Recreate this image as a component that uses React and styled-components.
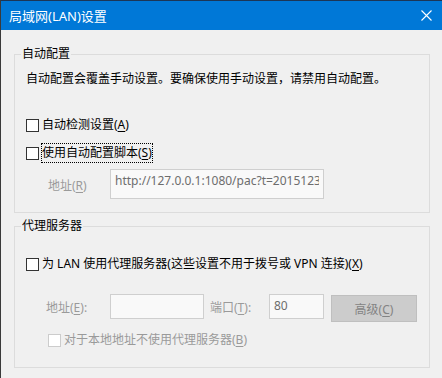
import React from "react";
import styled, { createGlobalStyle } from "styled-components";

const Global = createGlobalStyle`
  html, body { margin: 0; padding: 0; background: #f0f0f0; }
  body { font-family: "Noto Sans", "Noto Sans CJK SC", sans-serif; }
  * { box-sizing: border-box; }
`;

const FONT = `"Noto Sans", "Noto Sans CJK SC", sans-serif`;

const Window = styled.div`
  width: 442px;
  height: 378px;
  overflow: hidden;
  background: #f0f0f0;
  border-left: 1px solid #3a3a3a;
  display: flex;
  flex-direction: column;
  font-family: ${FONT};
  font-size: 12px;
  color: #000;
`;

const TitleBar = styled.div`
  height: 30px;
  flex: none;
  background: #0078d7;
  border-top: 1px solid #1c3656;
  display: flex;
  align-items: center;
  justify-content: space-between;
  padding: 0 10px 0 8px;
`;

const Title = styled.div`
  color: #fff;
  font-size: 13px;
  line-height: 16px;
`;

const Body = styled.div`
  padding: 16px 12px 0 13px;
  display: flex;
  flex-direction: column;
`;

const Group = styled.fieldset`
  margin: ${(p) => (p.$first ? "0" : "5px 0 0 0")};
  padding: 0;
  border: 1px solid #dcdcdc;
  min-width: 0;
`;

const Legend = styled.legend`
  margin-left: 6px;
  padding: 0 1px;
  font-size: 12px;
  line-height: 16px;
  color: #000;
`;

const GroupContent = styled.div`
  display: flex;
  flex-direction: column;
  padding: ${(p) => p.$pad};
`;

const Desc = styled.div`
  line-height: 16px;
  white-space: nowrap;
`;

const CheckRow = styled.div`
  display: flex;
  align-items: center;
  height: 20px;
  margin-top: ${(p) => p.$mt || 0}px;
  margin-left: ${(p) => p.$indent || 0}px;
`;

const Box = styled.span`
  width: 13px;
  height: 13px;
  flex: none;
  background: #fff;
  border: 1px solid ${(p) => (p.$disabled ? "#cccccc" : "#333333")};
  margin-right: 2px;
`;

const CheckLabel = styled.span`
  line-height: 16px;
  padding: 1px 0;
  border: 1px ${(p) => (p.$focus ? "dotted #000" : "solid transparent")};
  color: ${(p) => (p.$disabled ? "#9a9a9a" : "#000")};
  white-space: nowrap;
`;

const Key = styled.span`
  text-decoration: underline;
  text-underline-offset: 2px;
`;

const FieldRow = styled.div`
  display: flex;
  align-items: ${(p) => p.$align || "center"};
  margin-top: ${(p) => p.$mt || 0}px;
  margin-left: ${(p) => p.$indent || 0}px;
`;

const FieldLabel = styled.span`
  width: ${(p) => p.$w}px;
  flex: none;
  margin-left: ${(p) => p.$ml || 0}px;
  color: #9a9a9a;
  line-height: 16px;
  white-space: nowrap;
  align-self: center;
  margin-top: ${(p) => p.$dy || 0}px;
`;

const Edit = styled.input`
  width: ${(p) => p.$w}px;
  height: ${(p) => p.$h}px;
  flex: none;
  margin: 0;
  border: 1px solid #cfcfcf;
  border-radius: 0;
  background: #f9f9f9;
  color: #6d6d6d;
  font-family: ${FONT};
  font-size: 12px;
  padding: ${(p) => p.$pad};
  outline: none;
`;

const AdvButton = styled.button`
  width: 86px;
  height: 27px;
  flex: none;
  margin: 1px 0 0 7px;
  padding: 0;
  background: #cccccc;
  border: 1px solid #bfbfbf;
  border-radius: 0;
  color: #838383;
  font-family: ${FONT};
  font-size: 12px;
`;

const CloseIcon = () => (
  <svg width="11" height="11" viewBox="0 0 11 11">
    <path d="M0.5 0.5 L10.5 10.5 M10.5 0.5 L0.5 10.5" stroke="#fff" strokeWidth="1.1" fill="none" />
  </svg>
);

export default function App() {
  return (
    <>
      <Global />
      <Window>
        <TitleBar>
          <Title>局域网(LAN)设置</Title>
          <CloseIcon />
        </TitleBar>
        <Body>
          <Group $first>
            <Legend>自动配置</Legend>
            <GroupContent $pad="9px 0 13px 11px">
              <Desc>自动配置会覆盖手动设置。要确保使用手动设置，请禁用自动配置。</Desc>
              <CheckRow $mt={28}>
                <Box />
                <CheckLabel>
                  自动检测设置(<Key>A</Key>)
                </CheckLabel>
              </CheckRow>
              <CheckRow $mt={8}>
                <Box />
                <CheckLabel $focus>
                  使用自动配置脚本(<Key>S</Key>)
                </CheckLabel>
              </CheckRow>
              <FieldRow $mt={6} $indent={22}>
                <FieldLabel $w={62} $dy={4}>
                  地址(<Key>R</Key>)
                </FieldLabel>
                <Edit
                  readOnly
                  $w={214}
                  $h={30}
                  $pad="0 4px 7px 4px"
                  value="http://127.0.0.1:1080/pac?t=20151231"
                />
              </FieldRow>
            </GroupContent>
          </Group>
          <Group>
            <Legend>代理服务器</Legend>
            <GroupContent $pad="20px 0 17px 11px">
              <CheckRow>
                <Box />
                <CheckLabel>
                  为 LAN 使用代理服务器(这些设置不用于拨号或 VPN 连接)(<Key>X</Key>)
                </CheckLabel>
              </CheckRow>
              <FieldRow $mt={20} $indent={20} $align="flex-start">
                <FieldLabel $w={64}>
                  地址(<Key>E</Key>):
                </FieldLabel>
                <Edit readOnly $w={94} $h={25} $pad="0 4px 2px 4px" value="" />
                <FieldLabel $w={59} $ml={6}>
                  端口(<Key>T</Key>):
                </FieldLabel>
                <Edit readOnly $w={55} $h={25} $pad="0 4px 3px 4px" value="80" />
                <AdvButton disabled>
                  高级(<Key>C</Key>)
                </AdvButton>
              </FieldRow>
              <CheckRow $mt={8} $indent={22}>
                <Box $disabled />
                <CheckLabel $disabled>
                  对于本地地址不使用代理服务器(<Key>B</Key>)
                </CheckLabel>
              </CheckRow>
            </GroupContent>
          </Group>
        </Body>
      </Window>
    </>
  );
}
